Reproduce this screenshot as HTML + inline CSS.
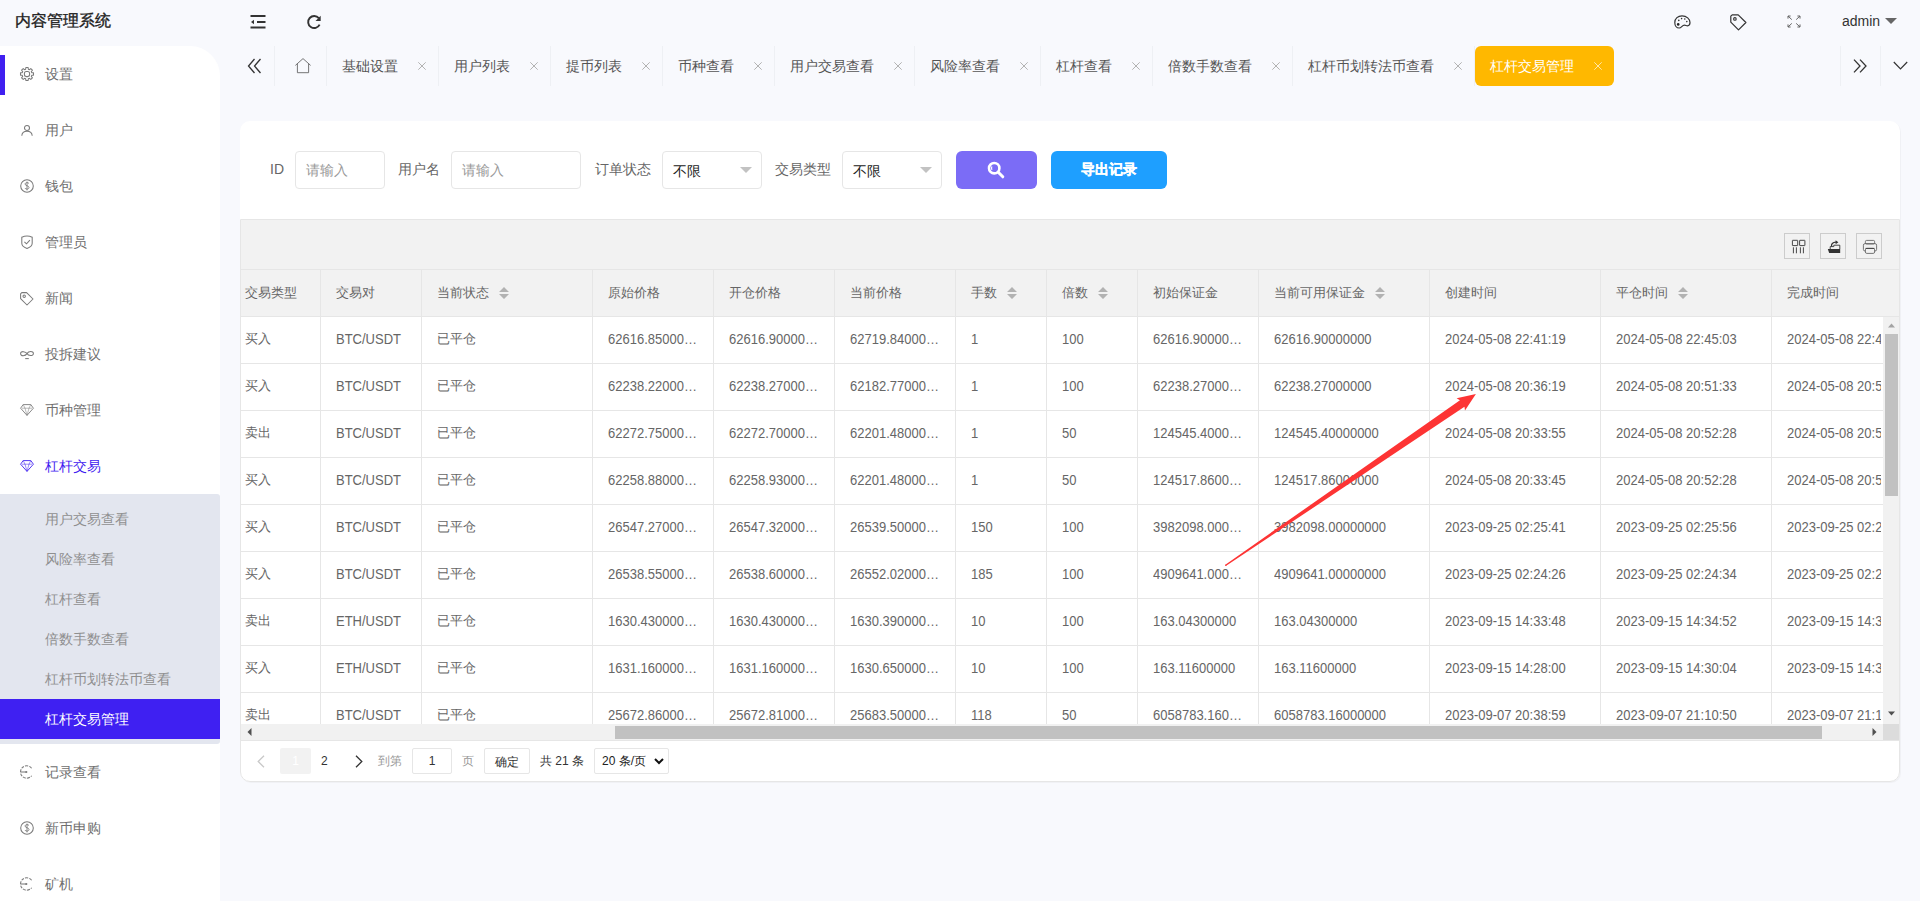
<!DOCTYPE html><html><head><meta charset="utf-8"><title>内容管理系统</title><style>
*{margin:0;padding:0;box-sizing:border-box}
html,body{width:1920px;height:901px;overflow:hidden;background:#f8f9fd;font-family:"Liberation Sans",sans-serif;}
.abs{position:absolute}
.t{position:absolute;white-space:nowrap}
svg{position:absolute;overflow:visible}
</style></head><body>
<div class="t" style="left:15px;top:10px;font-size:16px;line-height:22px;color:#222;-webkit-text-stroke:0.35px #222">内容管理系统</div>
<svg style="left:250px;top:14px" width="16" height="16" viewBox="0 0 16 16"><path d="M0.5 2h15M7 8h8.5M0.5 13.5h15" stroke="#333" stroke-width="1.8" fill="none"/><path d="M1 8l3-2.2v4.4z" fill="#333"/></svg>
<svg style="left:307px;top:14.5px" width="15" height="15" viewBox="0 0 15 15"><path d="M12.6 9.6A6 6 0 1 1 11.8 3.2" stroke="#333" stroke-width="1.9" fill="none"/><path d="M13.7 0.8v5.2H8.5z" fill="#333"/></svg>
<svg style="left:1674px;top:15px" width="17" height="14" viewBox="0 0 17 14"><path d="M8 0.8C4 0.8 0.8 3.6 0.8 7.4c0 3 1.6 5.6 4.4 5.6 2.3 0 2.8-2.8 5.3-2.8 1.2 0 1.8 0.6 3 0.6 1.2 0 2.5-1 2.5-3.2C16 4 12.6 0.8 8 0.8z" stroke="#333" stroke-width="1.2" fill="none"/><circle cx="4.2" cy="9.4" r="1.3" fill="#222"/><circle cx="4.8" cy="5.4" r="0.8" fill="#333"/><circle cx="7.6" cy="3.6" r="0.8" fill="#333"/><circle cx="10.8" cy="4" r="0.8" fill="#333"/><circle cx="12.8" cy="6.6" r="0.8" fill="#333"/></svg>
<svg style="left:1730px;top:14px" width="17" height="17" viewBox="0 0 17 17"><path d="M0.8 2.2L2.2 0.8H8.2L15.9 8.5L8.5 15.9L0.8 8.2z" stroke="#333" stroke-width="1.2" fill="none" stroke-linejoin="round"/><circle cx="4.9" cy="4.9" r="1.3" stroke="#333" stroke-width="1.1" fill="none"/></svg>
<svg style="left:1787px;top:15px" width="14" height="13" viewBox="0 0 14 13"><path d="M1.2 1.2l3.6 3.4M1 1h2.6M1 1v2.6M12.8 1.2l-3.6 3.4M13 1h-2.6M13 1v2.6M1.2 11.8l3.6-3.4M1 12h2.6M1 12v-2.6M12.8 11.8l-3.6-3.4M13 12h-2.6M13 12v-2.6" stroke="#555" stroke-width="0.9" fill="none"/></svg>
<div class="t" style="left:1842px;top:13px;font-size:14px;line-height:17px;color:#333">admin</div>
<svg style="left:1885px;top:18px" width="12" height="6" viewBox="0 0 12 6"><path d="M0 0h12L6 6z" fill="#666"/></svg>
<div class="abs" style="left:0;top:46px;width:220px;height:855px;background:#fff;border-top-right-radius:30px"></div>
<div class="abs" style="left:0;top:55px;width:5px;height:40px;background:#4020f0"></div>
<svg style="left:20px;top:66.5px" width="14" height="14" viewBox="0 0 14 14"><path d="M5.85 0.50L8.15 0.50L8.35 2.29L9.38 2.71L10.79 1.59L12.41 3.21L11.29 4.62L11.71 5.65L13.50 5.85L13.50 8.15L11.71 8.35L11.29 9.38L12.41 10.79L10.79 12.41L9.38 11.29L8.35 11.71L8.15 13.50L5.85 13.50L5.65 11.71L4.62 11.29L3.21 12.41L1.59 10.79L2.71 9.38L2.29 8.35L0.50 8.15L0.50 5.85L2.29 5.65L2.71 4.62L1.59 3.21L3.21 1.59L4.62 2.71L5.65 2.29z" stroke="#7a7a7a" stroke-width="1.05" fill="none" stroke-linejoin="round"/><rect x="4.4" y="4.4" width="5.2" height="5.2" rx="2" stroke="#7a7a7a" stroke-width="1.05" fill="none"/></svg>
<div class="t" style="left:45px;top:63.5px;font-size:14px;line-height:20px;color:#6f6f6f">设置</div>
<svg style="left:21px;top:124.5px" width="12" height="12" viewBox="0 0 12 12"><circle cx="6" cy="2.9" r="2.5" stroke="#7a7a7a" stroke-width="1.05" fill="none"/><path d="M0.8 10.8C1 7.8 3.2 6.2 6 6.2s5 1.6 5.2 4.6" stroke="#7a7a7a" stroke-width="1.05" fill="none"/></svg>
<div class="t" style="left:45px;top:119.5px;font-size:14px;line-height:20px;color:#6f6f6f">用户</div>
<svg style="left:20px;top:179px" width="14" height="14" viewBox="0 0 14 14"><circle cx="7" cy="7" r="6.3" stroke="#7a7a7a" stroke-width="1.05" fill="none"/><path d="M9 4.6C8.6 3.9 7.9 3.6 7 3.6 5.9 3.6 5.1 4.2 5.1 5.1c0 2 3.9 1.3 3.9 3.4 0 0.9-0.8 1.6-2 1.6-1 0-1.8-0.4-2.1-1.1M7 2.6v8.8" stroke="#7a7a7a" stroke-width="0.9" fill="none"/></svg>
<div class="t" style="left:45px;top:176px;font-size:14px;line-height:20px;color:#6f6f6f">钱包</div>
<svg style="left:21px;top:235px" width="12" height="14" viewBox="0 0 12 14"><path d="M0.8 2.2Q6 -0.2 11.2 2.2V8.2C11.2 10.8 8.8 12.4 6 13.4 3.2 12.4 0.8 10.8 0.8 8.2z" stroke="#7a7a7a" stroke-width="1.05" fill="none"/><path d="M3.4 6.8l2.1 2 3.4-3.6" stroke="#7a7a7a" stroke-width="1.05" fill="none"/></svg>
<div class="t" style="left:45px;top:232px;font-size:14px;line-height:20px;color:#6f6f6f">管理员</div>
<svg style="left:20px;top:292px" width="14" height="14" viewBox="0 0 14 14"><path d="M0.6 1.8L1.8 0.6H6.6L13 7L7 13L0.6 6.6z" stroke="#7a7a7a" stroke-width="1.05" fill="none" stroke-linejoin="round"/><circle cx="4.2" cy="4.2" r="1.2" stroke="#7a7a7a" stroke-width="1.05" fill="none"/></svg>
<div class="t" style="left:45px;top:288px;font-size:14px;line-height:20px;color:#6f6f6f">新闻</div>
<svg style="left:20px;top:350px" width="14" height="12" viewBox="0 0 14 12"><path d="M7 3.6C5.8 1.4 0.6 0.6 0.6 3.6 0.6 6.6 5.4 6.2 7 3.6S13.4 0.8 13.4 3.6 8.2 6 7 3.6" stroke="#7a7a7a" stroke-width="1.05" fill="none"/><path d="M5.2 8.6h3.6" stroke="#7a7a7a" stroke-width="1.05"/></svg>
<div class="t" style="left:45px;top:344px;font-size:14px;line-height:20px;color:#6f6f6f">投拆建议</div>
<svg style="left:20px;top:404px" width="14" height="12" viewBox="0 0 14 12"><path d="M3.2 0.6h7.6L13.4 4.2L7 11.4L0.6 4.2z" stroke="#7a7a7a" stroke-width="0.9" fill="none" stroke-linejoin="round"/><path d="M2 4.2h10 M3.2 0.6L5 4.2L7 11.4L9 4.2L10.8 0.6" stroke="#7a7a7a" stroke-width="0.65" fill="none" stroke-linejoin="round" opacity="0.8"/></svg>
<div class="t" style="left:45px;top:400px;font-size:14px;line-height:20px;color:#6f6f6f">币种管理</div>
<svg style="left:20px;top:460px" width="14" height="12" viewBox="0 0 14 12"><path d="M3.2 0.6h7.6L13.4 4.2L7 11.4L0.6 4.2z" stroke="#4020f0" stroke-width="0.9" fill="none" stroke-linejoin="round"/><path d="M2 4.2h10 M3.2 0.6L5 4.2L7 11.4L9 4.2L10.8 0.6" stroke="#4020f0" stroke-width="0.65" fill="none" stroke-linejoin="round" opacity="0.8"/></svg>
<div class="t" style="left:45px;top:456px;font-size:14px;line-height:20px;color:#4020f0">杠杆交易</div>
<svg style="left:20px;top:765px" width="14" height="14" viewBox="0 0 14 14"><path d="M11.6 3.2A6.2 6.2 0 1 0 11.6 10.8" stroke="#7a7a7a" stroke-width="1.05" fill="none" stroke-dasharray="3 1.1"/><path d="M1 7h5" stroke="#7a7a7a" stroke-width="1.05"/><circle cx="6.3" cy="7" r="1.1" fill="#7a7a7a"/></svg>
<div class="t" style="left:45px;top:762px;font-size:14px;line-height:20px;color:#6f6f6f">记录查看</div>
<svg style="left:20px;top:821px" width="14" height="14" viewBox="0 0 14 14"><circle cx="7" cy="7" r="6.3" stroke="#7a7a7a" stroke-width="1.05" fill="none"/><path d="M9 4.6C8.6 3.9 7.9 3.6 7 3.6 5.9 3.6 5.1 4.2 5.1 5.1c0 2 3.9 1.3 3.9 3.4 0 0.9-0.8 1.6-2 1.6-1 0-1.8-0.4-2.1-1.1M7 2.6v8.8" stroke="#7a7a7a" stroke-width="0.9" fill="none"/></svg>
<div class="t" style="left:45px;top:818px;font-size:14px;line-height:20px;color:#6f6f6f">新币申购</div>
<svg style="left:20px;top:877px" width="14" height="14" viewBox="0 0 14 14"><path d="M11.6 3.2A6.2 6.2 0 1 0 11.6 10.8" stroke="#7a7a7a" stroke-width="1.05" fill="none" stroke-dasharray="3 1.1"/><path d="M1 7h5" stroke="#7a7a7a" stroke-width="1.05"/><circle cx="6.3" cy="7" r="1.1" fill="#7a7a7a"/></svg>
<div class="t" style="left:45px;top:874px;font-size:14px;line-height:20px;color:#6f6f6f">矿机</div>
<div class="abs" style="left:0;top:494px;width:220px;height:250px;background:#e3e6ef;border-radius:0 3px 3px 0"></div>
<div class="abs" style="left:0;top:699px;width:220px;height:40px;background:#3f20f2"></div>
<div class="t" style="left:45px;top:508.5px;font-size:14px;line-height:20px;color:#8f8f8f">用户交易查看</div>
<div class="t" style="left:45px;top:548.5px;font-size:14px;line-height:20px;color:#8f8f8f">风险率查看</div>
<div class="t" style="left:45px;top:588.5px;font-size:14px;line-height:20px;color:#8f8f8f">杠杆查看</div>
<div class="t" style="left:45px;top:628.5px;font-size:14px;line-height:20px;color:#8f8f8f">倍数手数查看</div>
<div class="t" style="left:45px;top:668.5px;font-size:14px;line-height:20px;color:#8f8f8f">杠杆币划转法币查看</div>
<div class="t" style="left:45px;top:708.5px;font-size:14px;line-height:20px;color:#fff">杠杆交易管理</div>
<div class="abs" style="left:274px;top:46px;width:1px;height:40px;background:#eef0f4"></div>
<div class="abs" style="left:326px;top:46px;width:1px;height:40px;background:#eef0f4"></div>
<div class="abs" style="left:438px;top:46px;width:1px;height:40px;background:#eef0f4"></div>
<div class="abs" style="left:550px;top:46px;width:1px;height:40px;background:#eef0f4"></div>
<div class="abs" style="left:662px;top:46px;width:1px;height:40px;background:#eef0f4"></div>
<div class="abs" style="left:774px;top:46px;width:1px;height:40px;background:#eef0f4"></div>
<div class="abs" style="left:914px;top:46px;width:1px;height:40px;background:#eef0f4"></div>
<div class="abs" style="left:1040px;top:46px;width:1px;height:40px;background:#eef0f4"></div>
<div class="abs" style="left:1152px;top:46px;width:1px;height:40px;background:#eef0f4"></div>
<div class="abs" style="left:1292px;top:46px;width:1px;height:40px;background:#eef0f4"></div>
<div class="abs" style="left:1474px;top:46px;width:1px;height:40px;background:#eef0f4"></div>
<div class="abs" style="left:1840px;top:46px;width:1px;height:40px;background:#eef0f4"></div>
<div class="abs" style="left:1880px;top:46px;width:1px;height:40px;background:#eef0f4"></div>
<svg style="left:247px;top:58px" width="15" height="16" viewBox="0 0 15 16"><path d="M7.5 1L1.5 8l6 7M13.5 1l-6 7 6 7" stroke="#333" stroke-width="1.3" fill="none"/></svg>
<svg style="left:295px;top:58px" width="16" height="16" viewBox="0 0 16 16"><path d="M0.4 7.4L8 0.6L15.6 7.4M2.4 5.8v8.9h11.2V5.8" stroke="#666" stroke-width="0.9" fill="none"/></svg>
<div class="t" style="left:342px;top:56px;font-size:14px;line-height:20px;color:#555">基础设置</div>
<svg style="left:418px;top:62px" width="8" height="8" viewBox="0 0 8 8"><path d="M0.3 0.3l7.4 7.4M7.7 0.3l-7.4 7.4" stroke="#b3b3b3" stroke-width="1"/></svg>
<div class="t" style="left:454px;top:56px;font-size:14px;line-height:20px;color:#555">用户列表</div>
<svg style="left:530px;top:62px" width="8" height="8" viewBox="0 0 8 8"><path d="M0.3 0.3l7.4 7.4M7.7 0.3l-7.4 7.4" stroke="#b3b3b3" stroke-width="1"/></svg>
<div class="t" style="left:566px;top:56px;font-size:14px;line-height:20px;color:#555">提币列表</div>
<svg style="left:642px;top:62px" width="8" height="8" viewBox="0 0 8 8"><path d="M0.3 0.3l7.4 7.4M7.7 0.3l-7.4 7.4" stroke="#b3b3b3" stroke-width="1"/></svg>
<div class="t" style="left:678px;top:56px;font-size:14px;line-height:20px;color:#555">币种查看</div>
<svg style="left:754px;top:62px" width="8" height="8" viewBox="0 0 8 8"><path d="M0.3 0.3l7.4 7.4M7.7 0.3l-7.4 7.4" stroke="#b3b3b3" stroke-width="1"/></svg>
<div class="t" style="left:790px;top:56px;font-size:14px;line-height:20px;color:#555">用户交易查看</div>
<svg style="left:894px;top:62px" width="8" height="8" viewBox="0 0 8 8"><path d="M0.3 0.3l7.4 7.4M7.7 0.3l-7.4 7.4" stroke="#b3b3b3" stroke-width="1"/></svg>
<div class="t" style="left:930px;top:56px;font-size:14px;line-height:20px;color:#555">风险率查看</div>
<svg style="left:1020px;top:62px" width="8" height="8" viewBox="0 0 8 8"><path d="M0.3 0.3l7.4 7.4M7.7 0.3l-7.4 7.4" stroke="#b3b3b3" stroke-width="1"/></svg>
<div class="t" style="left:1056px;top:56px;font-size:14px;line-height:20px;color:#555">杠杆查看</div>
<svg style="left:1132px;top:62px" width="8" height="8" viewBox="0 0 8 8"><path d="M0.3 0.3l7.4 7.4M7.7 0.3l-7.4 7.4" stroke="#b3b3b3" stroke-width="1"/></svg>
<div class="t" style="left:1168px;top:56px;font-size:14px;line-height:20px;color:#555">倍数手数查看</div>
<svg style="left:1272px;top:62px" width="8" height="8" viewBox="0 0 8 8"><path d="M0.3 0.3l7.4 7.4M7.7 0.3l-7.4 7.4" stroke="#b3b3b3" stroke-width="1"/></svg>
<div class="t" style="left:1308px;top:56px;font-size:14px;line-height:20px;color:#555">杠杆币划转法币查看</div>
<svg style="left:1454px;top:62px" width="8" height="8" viewBox="0 0 8 8"><path d="M0.3 0.3l7.4 7.4M7.7 0.3l-7.4 7.4" stroke="#b3b3b3" stroke-width="1"/></svg>
<div class="abs" style="left:1475px;top:46px;width:139px;height:40px;background:#ffb800;border-radius:6px"></div>
<div class="t" style="left:1490px;top:56px;font-size:14px;line-height:20px;color:#fff">杠杆交易管理</div>
<svg style="left:1594px;top:62px" width="8" height="8" viewBox="0 0 8 8"><path d="M0.3 0.3l7.4 7.4M7.7 0.3l-7.4 7.4" stroke="#ffe6a8" stroke-width="1"/></svg>
<svg style="left:1853px;top:59px" width="14" height="14" viewBox="0 0 14 14"><path d="M1 0.6l6 6.4-6 6.4M7 0.6l6 6.4-6 6.4" stroke="#333" stroke-width="1.3" fill="none"/></svg>
<svg style="left:1893px;top:61px" width="15" height="9" viewBox="0 0 15 9"><path d="M0.8 1l6.7 7 6.7-7" stroke="#333" stroke-width="1.2" fill="none"/></svg>
<div class="abs" style="left:240px;top:121px;width:1660px;height:661px;background:#fff;border-radius:10px;box-shadow:1px 1px 1px rgba(0,0,40,0.035)"></div>
<div class="t" style="left:270px;top:159px;font-size:14px;line-height:20px;color:#666">ID</div>
<div class="abs" style="left:295px;top:151px;width:90px;height:38px;border:1px solid #e6e6e6;border-radius:4px;background:#fff"></div>
<div class="t" style="left:306px;top:160px;font-size:14px;line-height:20px;color:#999">请输入</div>
<div class="t" style="left:398px;top:159px;font-size:14px;line-height:20px;color:#666">用户名</div>
<div class="abs" style="left:451px;top:151px;width:130px;height:38px;border:1px solid #e6e6e6;border-radius:4px;background:#fff"></div>
<div class="t" style="left:462px;top:160px;font-size:14px;line-height:20px;color:#999">请输入</div>
<div class="t" style="left:595px;top:159px;font-size:14px;line-height:20px;color:#666">订单状态</div>
<div class="abs" style="left:662px;top:151px;width:100px;height:38px;border:1px solid #e6e6e6;border-radius:4px;background:#fff"></div>
<div class="t" style="left:673px;top:161px;font-size:14px;line-height:20px;color:#222">不限</div>
<svg style="left:740px;top:167px" width="12" height="6" viewBox="0 0 12 6"><path d="M0 0h12L6 6z" fill="#c2c2c2"/></svg>
<div class="t" style="left:775px;top:159px;font-size:14px;line-height:20px;color:#666">交易类型</div>
<div class="abs" style="left:842px;top:151px;width:100px;height:38px;border:1px solid #e6e6e6;border-radius:4px;background:#fff"></div>
<div class="t" style="left:853px;top:161px;font-size:14px;line-height:20px;color:#222">不限</div>
<svg style="left:920px;top:167px" width="12" height="6" viewBox="0 0 12 6"><path d="M0 0h12L6 6z" fill="#c2c2c2"/></svg>
<div class="abs" style="left:956px;top:151px;width:81px;height:38px;background:#7b6cf6;border-radius:6px"></div>
<svg style="left:987px;top:161px" width="18" height="18" viewBox="0 0 18 18"><circle cx="7.2" cy="7.2" r="5.2" stroke="#fff" stroke-width="2.6" fill="none"/><path d="M11 11l4.8 4.8" stroke="#fff" stroke-width="3" stroke-linecap="round"/><path d="M5 5.5a3 3 0 0 0 0 3.4" stroke="#fff" stroke-width="1.2" fill="none"/></svg>
<div class="abs" style="left:1051px;top:151px;width:116px;height:38px;background:#1e9fff;border-radius:6px"></div>
<div class="t" style="left:1081px;top:159px;font-size:14px;line-height:20px;color:#fff;font-weight:bold;-webkit-text-stroke:0.3px #fff">导出记录</div>
<div class="abs" style="left:240px;top:219px;width:1660px;height:563px;border:1px solid #e6e6e6;border-bottom-left-radius:10px;border-bottom-right-radius:10px"></div>
<div class="abs" style="left:241px;top:220px;width:1658px;height:96px;background:#f2f2f2"></div>
<div class="abs" style="left:241px;top:269px;width:1658px;height:1px;background:#e6e6e6"></div>
<div class="abs" style="left:241px;top:316px;width:1658px;height:1px;background:#e6e6e6"></div>
<div class="abs" style="left:1784px;top:233px;width:26px;height:26px;border:1px solid #ccc"></div>
<div class="abs" style="left:1820px;top:233px;width:26px;height:26px;border:1px solid #ccc"></div>
<div class="abs" style="left:1856px;top:233px;width:26px;height:26px;border:1px solid #ccc"></div>
<svg style="left:1782px;top:231px" width="30" height="30" viewBox="0 0 30 30"><rect x="10.4" y="9.3" width="5.3" height="5.3" rx="0.3" stroke="#333" stroke-width="0.9" fill="none"/><rect x="17.6" y="9.3" width="5.3" height="5.3" rx="0.3" stroke="#333" stroke-width="0.9" fill="none"/><path d="M11.4 16.3v6M14.4 16.3v6M18.4 16.3v6M21.4 16.3v6" stroke="#333" stroke-width="0.9"/></svg>
<svg style="left:1818px;top:231px" width="30" height="30" viewBox="0 0 30 30"><path d="M9.8 18.1H22.2V22H11.2z" fill="#333"/><path d="M12.2 18V15.6h3.6v-1.4h6V18" stroke="#333" stroke-width="0.9" fill="none"/><path d="M13.6 15.6c-0.6-2.6 1-4.2 4.4-4.4" stroke="#333" stroke-width="1.3" fill="none"/><path d="M17.6 9.2L20.4 11.2L17.6 13.2z" fill="#333"/></svg>
<svg style="left:1854px;top:231px" width="30" height="30" viewBox="0 0 30 30"><rect x="11.4" y="9.4" width="9.2" height="3.6" rx="1.2" stroke="#666" stroke-width="0.9" fill="none"/><rect x="9.4" y="12.6" width="13.2" height="7.4" rx="1.6" stroke="#666" stroke-width="0.9" fill="none"/><rect x="11.4" y="17.4" width="9.2" height="5" rx="1.4" stroke="#666" stroke-width="0.9" fill="#f2f2f2"/><path d="M11.6 17.4h8.8" stroke="#444" stroke-width="1"/></svg>
<div class="abs" style="left:320px;top:270px;width:1px;height:46px;background:#e6e6e6"></div>
<div class="abs" style="left:421px;top:270px;width:1px;height:46px;background:#e6e6e6"></div>
<div class="abs" style="left:592px;top:270px;width:1px;height:46px;background:#e6e6e6"></div>
<div class="abs" style="left:713px;top:270px;width:1px;height:46px;background:#e6e6e6"></div>
<div class="abs" style="left:834px;top:270px;width:1px;height:46px;background:#e6e6e6"></div>
<div class="abs" style="left:955px;top:270px;width:1px;height:46px;background:#e6e6e6"></div>
<div class="abs" style="left:1046px;top:270px;width:1px;height:46px;background:#e6e6e6"></div>
<div class="abs" style="left:1137px;top:270px;width:1px;height:46px;background:#e6e6e6"></div>
<div class="abs" style="left:1258px;top:270px;width:1px;height:46px;background:#e6e6e6"></div>
<div class="abs" style="left:1429px;top:270px;width:1px;height:46px;background:#e6e6e6"></div>
<div class="abs" style="left:1600px;top:270px;width:1px;height:46px;background:#e6e6e6"></div>
<div class="abs" style="left:1771px;top:270px;width:1px;height:46px;background:#e6e6e6"></div>
<div class="t" style="left:245px;top:284px;font-size:13px;line-height:18px;color:#666">交易类型</div>
<div class="t" style="left:336px;top:284px;font-size:13px;line-height:18px;color:#666">交易对</div>
<div class="t" style="left:437px;top:284px;font-size:13px;line-height:18px;color:#666">当前状态</div>
<svg style="left:499px;top:287px" width="10" height="12" viewBox="0 0 10 12"><path d="M0 5L5 0L10 5z M0 7L5 12L10 7z" fill="#b2b2b2"/></svg>
<div class="t" style="left:608px;top:284px;font-size:13px;line-height:18px;color:#666">原始价格</div>
<div class="t" style="left:729px;top:284px;font-size:13px;line-height:18px;color:#666">开仓价格</div>
<div class="t" style="left:850px;top:284px;font-size:13px;line-height:18px;color:#666">当前价格</div>
<div class="t" style="left:971px;top:284px;font-size:13px;line-height:18px;color:#666">手数</div>
<svg style="left:1007px;top:287px" width="10" height="12" viewBox="0 0 10 12"><path d="M0 5L5 0L10 5z M0 7L5 12L10 7z" fill="#b2b2b2"/></svg>
<div class="t" style="left:1062px;top:284px;font-size:13px;line-height:18px;color:#666">倍数</div>
<svg style="left:1098px;top:287px" width="10" height="12" viewBox="0 0 10 12"><path d="M0 5L5 0L10 5z M0 7L5 12L10 7z" fill="#b2b2b2"/></svg>
<div class="t" style="left:1153px;top:284px;font-size:13px;line-height:18px;color:#666">初始保证金</div>
<div class="t" style="left:1274px;top:284px;font-size:13px;line-height:18px;color:#666">当前可用保证金</div>
<svg style="left:1375px;top:287px" width="10" height="12" viewBox="0 0 10 12"><path d="M0 5L5 0L10 5z M0 7L5 12L10 7z" fill="#b2b2b2"/></svg>
<div class="t" style="left:1445px;top:284px;font-size:13px;line-height:18px;color:#666">创建时间</div>
<div class="t" style="left:1616px;top:284px;font-size:13px;line-height:18px;color:#666">平仓时间</div>
<svg style="left:1678px;top:287px" width="10" height="12" viewBox="0 0 10 12"><path d="M0 5L5 0L10 5z M0 7L5 12L10 7z" fill="#b2b2b2"/></svg>
<div class="t" style="left:1787px;top:284px;font-size:13px;line-height:18px;color:#666">完成时间</div>
<div class="abs" style="left:241px;top:317px;width:1642px;height:407px;overflow:hidden;background:#fff">
<div class="t" style="left:4px;top:13px;font-size:13px;line-height:18px;color:#666">买入</div>
<div class="t" style="left:95px;top:13px;font-size:13px;line-height:18px;color:#666;transform:scaleY(1.075);transform-origin:0 4.2px">BTC/USDT</div>
<div class="t" style="left:196px;top:13px;font-size:13px;line-height:18px;color:#666">已平仓</div>
<div class="t" style="left:367px;top:13px;font-size:13px;line-height:18px;color:#666;transform:scaleY(1.075);transform-origin:0 4.2px">62616.85000…</div>
<div class="t" style="left:488px;top:13px;font-size:13px;line-height:18px;color:#666;transform:scaleY(1.075);transform-origin:0 4.2px">62616.90000…</div>
<div class="t" style="left:609px;top:13px;font-size:13px;line-height:18px;color:#666;transform:scaleY(1.075);transform-origin:0 4.2px">62719.84000…</div>
<div class="t" style="left:730px;top:13px;font-size:13px;line-height:18px;color:#666;transform:scaleY(1.075);transform-origin:0 4.2px">1</div>
<div class="t" style="left:821px;top:13px;font-size:13px;line-height:18px;color:#666;transform:scaleY(1.075);transform-origin:0 4.2px">100</div>
<div class="t" style="left:912px;top:13px;font-size:13px;line-height:18px;color:#666;transform:scaleY(1.075);transform-origin:0 4.2px">62616.90000…</div>
<div class="t" style="left:1033px;top:13px;font-size:13px;line-height:18px;color:#666;transform:scaleY(1.075);transform-origin:0 4.2px">62616.90000000</div>
<div class="t" style="left:1204px;top:13px;font-size:13px;line-height:18px;color:#666;transform:scaleY(1.075);transform-origin:0 4.2px">2024-05-08 22:41:19</div>
<div class="t" style="left:1375px;top:13px;font-size:13px;line-height:18px;color:#666;transform:scaleY(1.075);transform-origin:0 4.2px">2024-05-08 22:45:03</div>
<div class="t" style="left:1546px;top:13px;font-size:13px;line-height:18px;color:#666;transform:scaleY(1.075);transform-origin:0 4.2px;width:94px;overflow:hidden">2024-05-08 22:41:19</div>
<div class="abs" style="left:0;top:46px;width:1642px;height:1px;background:#e6e6e6"></div>
<div class="t" style="left:4px;top:60px;font-size:13px;line-height:18px;color:#666">买入</div>
<div class="t" style="left:95px;top:60px;font-size:13px;line-height:18px;color:#666;transform:scaleY(1.075);transform-origin:0 4.2px">BTC/USDT</div>
<div class="t" style="left:196px;top:60px;font-size:13px;line-height:18px;color:#666">已平仓</div>
<div class="t" style="left:367px;top:60px;font-size:13px;line-height:18px;color:#666;transform:scaleY(1.075);transform-origin:0 4.2px">62238.22000…</div>
<div class="t" style="left:488px;top:60px;font-size:13px;line-height:18px;color:#666;transform:scaleY(1.075);transform-origin:0 4.2px">62238.27000…</div>
<div class="t" style="left:609px;top:60px;font-size:13px;line-height:18px;color:#666;transform:scaleY(1.075);transform-origin:0 4.2px">62182.77000…</div>
<div class="t" style="left:730px;top:60px;font-size:13px;line-height:18px;color:#666;transform:scaleY(1.075);transform-origin:0 4.2px">1</div>
<div class="t" style="left:821px;top:60px;font-size:13px;line-height:18px;color:#666;transform:scaleY(1.075);transform-origin:0 4.2px">100</div>
<div class="t" style="left:912px;top:60px;font-size:13px;line-height:18px;color:#666;transform:scaleY(1.075);transform-origin:0 4.2px">62238.27000…</div>
<div class="t" style="left:1033px;top:60px;font-size:13px;line-height:18px;color:#666;transform:scaleY(1.075);transform-origin:0 4.2px">62238.27000000</div>
<div class="t" style="left:1204px;top:60px;font-size:13px;line-height:18px;color:#666;transform:scaleY(1.075);transform-origin:0 4.2px">2024-05-08 20:36:19</div>
<div class="t" style="left:1375px;top:60px;font-size:13px;line-height:18px;color:#666;transform:scaleY(1.075);transform-origin:0 4.2px">2024-05-08 20:51:33</div>
<div class="t" style="left:1546px;top:60px;font-size:13px;line-height:18px;color:#666;transform:scaleY(1.075);transform-origin:0 4.2px;width:94px;overflow:hidden">2024-05-08 20:51:33</div>
<div class="abs" style="left:0;top:93px;width:1642px;height:1px;background:#e6e6e6"></div>
<div class="t" style="left:4px;top:107px;font-size:13px;line-height:18px;color:#666">卖出</div>
<div class="t" style="left:95px;top:107px;font-size:13px;line-height:18px;color:#666;transform:scaleY(1.075);transform-origin:0 4.2px">BTC/USDT</div>
<div class="t" style="left:196px;top:107px;font-size:13px;line-height:18px;color:#666">已平仓</div>
<div class="t" style="left:367px;top:107px;font-size:13px;line-height:18px;color:#666;transform:scaleY(1.075);transform-origin:0 4.2px">62272.75000…</div>
<div class="t" style="left:488px;top:107px;font-size:13px;line-height:18px;color:#666;transform:scaleY(1.075);transform-origin:0 4.2px">62272.70000…</div>
<div class="t" style="left:609px;top:107px;font-size:13px;line-height:18px;color:#666;transform:scaleY(1.075);transform-origin:0 4.2px">62201.48000…</div>
<div class="t" style="left:730px;top:107px;font-size:13px;line-height:18px;color:#666;transform:scaleY(1.075);transform-origin:0 4.2px">1</div>
<div class="t" style="left:821px;top:107px;font-size:13px;line-height:18px;color:#666;transform:scaleY(1.075);transform-origin:0 4.2px">50</div>
<div class="t" style="left:912px;top:107px;font-size:13px;line-height:18px;color:#666;transform:scaleY(1.075);transform-origin:0 4.2px">124545.4000…</div>
<div class="t" style="left:1033px;top:107px;font-size:13px;line-height:18px;color:#666;transform:scaleY(1.075);transform-origin:0 4.2px">124545.40000000</div>
<div class="t" style="left:1204px;top:107px;font-size:13px;line-height:18px;color:#666;transform:scaleY(1.075);transform-origin:0 4.2px">2024-05-08 20:33:55</div>
<div class="t" style="left:1375px;top:107px;font-size:13px;line-height:18px;color:#666;transform:scaleY(1.075);transform-origin:0 4.2px">2024-05-08 20:52:28</div>
<div class="t" style="left:1546px;top:107px;font-size:13px;line-height:18px;color:#666;transform:scaleY(1.075);transform-origin:0 4.2px;width:94px;overflow:hidden">2024-05-08 20:52:28</div>
<div class="abs" style="left:0;top:140px;width:1642px;height:1px;background:#e6e6e6"></div>
<div class="t" style="left:4px;top:154px;font-size:13px;line-height:18px;color:#666">买入</div>
<div class="t" style="left:95px;top:154px;font-size:13px;line-height:18px;color:#666;transform:scaleY(1.075);transform-origin:0 4.2px">BTC/USDT</div>
<div class="t" style="left:196px;top:154px;font-size:13px;line-height:18px;color:#666">已平仓</div>
<div class="t" style="left:367px;top:154px;font-size:13px;line-height:18px;color:#666;transform:scaleY(1.075);transform-origin:0 4.2px">62258.88000…</div>
<div class="t" style="left:488px;top:154px;font-size:13px;line-height:18px;color:#666;transform:scaleY(1.075);transform-origin:0 4.2px">62258.93000…</div>
<div class="t" style="left:609px;top:154px;font-size:13px;line-height:18px;color:#666;transform:scaleY(1.075);transform-origin:0 4.2px">62201.48000…</div>
<div class="t" style="left:730px;top:154px;font-size:13px;line-height:18px;color:#666;transform:scaleY(1.075);transform-origin:0 4.2px">1</div>
<div class="t" style="left:821px;top:154px;font-size:13px;line-height:18px;color:#666;transform:scaleY(1.075);transform-origin:0 4.2px">50</div>
<div class="t" style="left:912px;top:154px;font-size:13px;line-height:18px;color:#666;transform:scaleY(1.075);transform-origin:0 4.2px">124517.8600…</div>
<div class="t" style="left:1033px;top:154px;font-size:13px;line-height:18px;color:#666;transform:scaleY(1.075);transform-origin:0 4.2px">124517.86000000</div>
<div class="t" style="left:1204px;top:154px;font-size:13px;line-height:18px;color:#666;transform:scaleY(1.075);transform-origin:0 4.2px">2024-05-08 20:33:45</div>
<div class="t" style="left:1375px;top:154px;font-size:13px;line-height:18px;color:#666;transform:scaleY(1.075);transform-origin:0 4.2px">2024-05-08 20:52:28</div>
<div class="t" style="left:1546px;top:154px;font-size:13px;line-height:18px;color:#666;transform:scaleY(1.075);transform-origin:0 4.2px;width:94px;overflow:hidden">2024-05-08 20:52:28</div>
<div class="abs" style="left:0;top:187px;width:1642px;height:1px;background:#e6e6e6"></div>
<div class="t" style="left:4px;top:201px;font-size:13px;line-height:18px;color:#666">买入</div>
<div class="t" style="left:95px;top:201px;font-size:13px;line-height:18px;color:#666;transform:scaleY(1.075);transform-origin:0 4.2px">BTC/USDT</div>
<div class="t" style="left:196px;top:201px;font-size:13px;line-height:18px;color:#666">已平仓</div>
<div class="t" style="left:367px;top:201px;font-size:13px;line-height:18px;color:#666;transform:scaleY(1.075);transform-origin:0 4.2px">26547.27000…</div>
<div class="t" style="left:488px;top:201px;font-size:13px;line-height:18px;color:#666;transform:scaleY(1.075);transform-origin:0 4.2px">26547.32000…</div>
<div class="t" style="left:609px;top:201px;font-size:13px;line-height:18px;color:#666;transform:scaleY(1.075);transform-origin:0 4.2px">26539.50000…</div>
<div class="t" style="left:730px;top:201px;font-size:13px;line-height:18px;color:#666;transform:scaleY(1.075);transform-origin:0 4.2px">150</div>
<div class="t" style="left:821px;top:201px;font-size:13px;line-height:18px;color:#666;transform:scaleY(1.075);transform-origin:0 4.2px">100</div>
<div class="t" style="left:912px;top:201px;font-size:13px;line-height:18px;color:#666;transform:scaleY(1.075);transform-origin:0 4.2px">3982098.000…</div>
<div class="t" style="left:1033px;top:201px;font-size:13px;line-height:18px;color:#666;transform:scaleY(1.075);transform-origin:0 4.2px">3982098.00000000</div>
<div class="t" style="left:1204px;top:201px;font-size:13px;line-height:18px;color:#666;transform:scaleY(1.075);transform-origin:0 4.2px">2023-09-25 02:25:41</div>
<div class="t" style="left:1375px;top:201px;font-size:13px;line-height:18px;color:#666;transform:scaleY(1.075);transform-origin:0 4.2px">2023-09-25 02:25:56</div>
<div class="t" style="left:1546px;top:201px;font-size:13px;line-height:18px;color:#666;transform:scaleY(1.075);transform-origin:0 4.2px;width:94px;overflow:hidden">2023-09-25 02:25:56</div>
<div class="abs" style="left:0;top:234px;width:1642px;height:1px;background:#e6e6e6"></div>
<div class="t" style="left:4px;top:248px;font-size:13px;line-height:18px;color:#666">买入</div>
<div class="t" style="left:95px;top:248px;font-size:13px;line-height:18px;color:#666;transform:scaleY(1.075);transform-origin:0 4.2px">BTC/USDT</div>
<div class="t" style="left:196px;top:248px;font-size:13px;line-height:18px;color:#666">已平仓</div>
<div class="t" style="left:367px;top:248px;font-size:13px;line-height:18px;color:#666;transform:scaleY(1.075);transform-origin:0 4.2px">26538.55000…</div>
<div class="t" style="left:488px;top:248px;font-size:13px;line-height:18px;color:#666;transform:scaleY(1.075);transform-origin:0 4.2px">26538.60000…</div>
<div class="t" style="left:609px;top:248px;font-size:13px;line-height:18px;color:#666;transform:scaleY(1.075);transform-origin:0 4.2px">26552.02000…</div>
<div class="t" style="left:730px;top:248px;font-size:13px;line-height:18px;color:#666;transform:scaleY(1.075);transform-origin:0 4.2px">185</div>
<div class="t" style="left:821px;top:248px;font-size:13px;line-height:18px;color:#666;transform:scaleY(1.075);transform-origin:0 4.2px">100</div>
<div class="t" style="left:912px;top:248px;font-size:13px;line-height:18px;color:#666;transform:scaleY(1.075);transform-origin:0 4.2px">4909641.000…</div>
<div class="t" style="left:1033px;top:248px;font-size:13px;line-height:18px;color:#666;transform:scaleY(1.075);transform-origin:0 4.2px">4909641.00000000</div>
<div class="t" style="left:1204px;top:248px;font-size:13px;line-height:18px;color:#666;transform:scaleY(1.075);transform-origin:0 4.2px">2023-09-25 02:24:26</div>
<div class="t" style="left:1375px;top:248px;font-size:13px;line-height:18px;color:#666;transform:scaleY(1.075);transform-origin:0 4.2px">2023-09-25 02:24:34</div>
<div class="t" style="left:1546px;top:248px;font-size:13px;line-height:18px;color:#666;transform:scaleY(1.075);transform-origin:0 4.2px;width:94px;overflow:hidden">2023-09-25 02:24:34</div>
<div class="abs" style="left:0;top:281px;width:1642px;height:1px;background:#e6e6e6"></div>
<div class="t" style="left:4px;top:295px;font-size:13px;line-height:18px;color:#666">卖出</div>
<div class="t" style="left:95px;top:295px;font-size:13px;line-height:18px;color:#666;transform:scaleY(1.075);transform-origin:0 4.2px">ETH/USDT</div>
<div class="t" style="left:196px;top:295px;font-size:13px;line-height:18px;color:#666">已平仓</div>
<div class="t" style="left:367px;top:295px;font-size:13px;line-height:18px;color:#666;transform:scaleY(1.075);transform-origin:0 4.2px">1630.430000…</div>
<div class="t" style="left:488px;top:295px;font-size:13px;line-height:18px;color:#666;transform:scaleY(1.075);transform-origin:0 4.2px">1630.430000…</div>
<div class="t" style="left:609px;top:295px;font-size:13px;line-height:18px;color:#666;transform:scaleY(1.075);transform-origin:0 4.2px">1630.390000…</div>
<div class="t" style="left:730px;top:295px;font-size:13px;line-height:18px;color:#666;transform:scaleY(1.075);transform-origin:0 4.2px">10</div>
<div class="t" style="left:821px;top:295px;font-size:13px;line-height:18px;color:#666;transform:scaleY(1.075);transform-origin:0 4.2px">100</div>
<div class="t" style="left:912px;top:295px;font-size:13px;line-height:18px;color:#666;transform:scaleY(1.075);transform-origin:0 4.2px">163.04300000</div>
<div class="t" style="left:1033px;top:295px;font-size:13px;line-height:18px;color:#666;transform:scaleY(1.075);transform-origin:0 4.2px">163.04300000</div>
<div class="t" style="left:1204px;top:295px;font-size:13px;line-height:18px;color:#666;transform:scaleY(1.075);transform-origin:0 4.2px">2023-09-15 14:33:48</div>
<div class="t" style="left:1375px;top:295px;font-size:13px;line-height:18px;color:#666;transform:scaleY(1.075);transform-origin:0 4.2px">2023-09-15 14:34:52</div>
<div class="t" style="left:1546px;top:295px;font-size:13px;line-height:18px;color:#666;transform:scaleY(1.075);transform-origin:0 4.2px;width:94px;overflow:hidden">2023-09-15 14:34:52</div>
<div class="abs" style="left:0;top:328px;width:1642px;height:1px;background:#e6e6e6"></div>
<div class="t" style="left:4px;top:342px;font-size:13px;line-height:18px;color:#666">买入</div>
<div class="t" style="left:95px;top:342px;font-size:13px;line-height:18px;color:#666;transform:scaleY(1.075);transform-origin:0 4.2px">ETH/USDT</div>
<div class="t" style="left:196px;top:342px;font-size:13px;line-height:18px;color:#666">已平仓</div>
<div class="t" style="left:367px;top:342px;font-size:13px;line-height:18px;color:#666;transform:scaleY(1.075);transform-origin:0 4.2px">1631.160000…</div>
<div class="t" style="left:488px;top:342px;font-size:13px;line-height:18px;color:#666;transform:scaleY(1.075);transform-origin:0 4.2px">1631.160000…</div>
<div class="t" style="left:609px;top:342px;font-size:13px;line-height:18px;color:#666;transform:scaleY(1.075);transform-origin:0 4.2px">1630.650000…</div>
<div class="t" style="left:730px;top:342px;font-size:13px;line-height:18px;color:#666;transform:scaleY(1.075);transform-origin:0 4.2px">10</div>
<div class="t" style="left:821px;top:342px;font-size:13px;line-height:18px;color:#666;transform:scaleY(1.075);transform-origin:0 4.2px">100</div>
<div class="t" style="left:912px;top:342px;font-size:13px;line-height:18px;color:#666;transform:scaleY(1.075);transform-origin:0 4.2px">163.11600000</div>
<div class="t" style="left:1033px;top:342px;font-size:13px;line-height:18px;color:#666;transform:scaleY(1.075);transform-origin:0 4.2px">163.11600000</div>
<div class="t" style="left:1204px;top:342px;font-size:13px;line-height:18px;color:#666;transform:scaleY(1.075);transform-origin:0 4.2px">2023-09-15 14:28:00</div>
<div class="t" style="left:1375px;top:342px;font-size:13px;line-height:18px;color:#666;transform:scaleY(1.075);transform-origin:0 4.2px">2023-09-15 14:30:04</div>
<div class="t" style="left:1546px;top:342px;font-size:13px;line-height:18px;color:#666;transform:scaleY(1.075);transform-origin:0 4.2px;width:94px;overflow:hidden">2023-09-15 14:30:04</div>
<div class="abs" style="left:0;top:375px;width:1642px;height:1px;background:#e6e6e6"></div>
<div class="t" style="left:4px;top:389px;font-size:13px;line-height:18px;color:#666">卖出</div>
<div class="t" style="left:95px;top:389px;font-size:13px;line-height:18px;color:#666;transform:scaleY(1.075);transform-origin:0 4.2px">BTC/USDT</div>
<div class="t" style="left:196px;top:389px;font-size:13px;line-height:18px;color:#666">已平仓</div>
<div class="t" style="left:367px;top:389px;font-size:13px;line-height:18px;color:#666;transform:scaleY(1.075);transform-origin:0 4.2px">25672.86000…</div>
<div class="t" style="left:488px;top:389px;font-size:13px;line-height:18px;color:#666;transform:scaleY(1.075);transform-origin:0 4.2px">25672.81000…</div>
<div class="t" style="left:609px;top:389px;font-size:13px;line-height:18px;color:#666;transform:scaleY(1.075);transform-origin:0 4.2px">25683.50000…</div>
<div class="t" style="left:730px;top:389px;font-size:13px;line-height:18px;color:#666;transform:scaleY(1.075);transform-origin:0 4.2px">118</div>
<div class="t" style="left:821px;top:389px;font-size:13px;line-height:18px;color:#666;transform:scaleY(1.075);transform-origin:0 4.2px">50</div>
<div class="t" style="left:912px;top:389px;font-size:13px;line-height:18px;color:#666;transform:scaleY(1.075);transform-origin:0 4.2px">6058783.160…</div>
<div class="t" style="left:1033px;top:389px;font-size:13px;line-height:18px;color:#666;transform:scaleY(1.075);transform-origin:0 4.2px">6058783.16000000</div>
<div class="t" style="left:1204px;top:389px;font-size:13px;line-height:18px;color:#666;transform:scaleY(1.075);transform-origin:0 4.2px">2023-09-07 20:38:59</div>
<div class="t" style="left:1375px;top:389px;font-size:13px;line-height:18px;color:#666;transform:scaleY(1.075);transform-origin:0 4.2px">2023-09-07 21:10:50</div>
<div class="t" style="left:1546px;top:389px;font-size:13px;line-height:18px;color:#666;transform:scaleY(1.075);transform-origin:0 4.2px;width:94px;overflow:hidden">2023-09-07 21:10:50</div>
<div class="abs" style="left:79px;top:0;width:1px;height:407px;background:#e6e6e6"></div>
<div class="abs" style="left:180px;top:0;width:1px;height:407px;background:#e6e6e6"></div>
<div class="abs" style="left:351px;top:0;width:1px;height:407px;background:#e6e6e6"></div>
<div class="abs" style="left:472px;top:0;width:1px;height:407px;background:#e6e6e6"></div>
<div class="abs" style="left:593px;top:0;width:1px;height:407px;background:#e6e6e6"></div>
<div class="abs" style="left:714px;top:0;width:1px;height:407px;background:#e6e6e6"></div>
<div class="abs" style="left:805px;top:0;width:1px;height:407px;background:#e6e6e6"></div>
<div class="abs" style="left:896px;top:0;width:1px;height:407px;background:#e6e6e6"></div>
<div class="abs" style="left:1017px;top:0;width:1px;height:407px;background:#e6e6e6"></div>
<div class="abs" style="left:1188px;top:0;width:1px;height:407px;background:#e6e6e6"></div>
<div class="abs" style="left:1359px;top:0;width:1px;height:407px;background:#e6e6e6"></div>
<div class="abs" style="left:1530px;top:0;width:1px;height:407px;background:#e6e6e6"></div>
</div>
<div class="abs" style="left:1883px;top:317px;width:16px;height:407px;background:#f1f1f1"></div>
<div class="abs" style="left:1885px;top:334px;width:13px;height:162px;background:#c1c1c1"></div>
<svg style="left:1888px;top:323px" width="7" height="5" viewBox="0 0 7 5"><path d="M0 4.5L3.5 0.5L7 4.5z" fill="#a3a3a3"/></svg>
<svg style="left:1888px;top:711px" width="7" height="5" viewBox="0 0 7 5"><path d="M0 0.5L3.5 4.5L7 0.5z" fill="#505050"/></svg>
<div class="abs" style="left:241px;top:724px;width:1642px;height:16px;background:#f1f1f1"></div>
<div class="abs" style="left:1883px;top:724px;width:16px;height:16px;background:#dcdcdc"></div>
<div class="abs" style="left:615px;top:726px;width:1207px;height:13px;background:#c1c1c1"></div>
<svg style="left:247px;top:728px" width="5" height="8" viewBox="0 0 5 8"><path d="M4.5 0L0.5 4L4.5 8z" fill="#505050"/></svg>
<svg style="left:1872px;top:728px" width="5" height="8" viewBox="0 0 5 8"><path d="M0.5 0L4.5 4L0.5 8z" fill="#505050"/></svg>
<div class="abs" style="left:241px;top:740px;width:1658px;height:1px;background:#e6e6e6"></div>
<svg style="left:257px;top:755px" width="8" height="13" viewBox="0 0 8 13"><path d="M7 0.8L1.2 6.5L7 12.2" stroke="#c8c8c8" stroke-width="1.3" fill="none"/></svg>
<div class="abs" style="left:280px;top:748px;width:31px;height:26px;background:#f2f2f2;border-radius:2px"></div>
<div class="t" style="left:280px;top:752px;width:31px;text-align:center;font-size:12px;line-height:18px;color:#fff">1</div>
<div class="t" style="left:321px;top:752px;font-size:12px;line-height:18px;color:#333">2</div>
<svg style="left:355px;top:755px" width="8" height="13" viewBox="0 0 8 13"><path d="M1 0.8L6.8 6.5L1 12.2" stroke="#333" stroke-width="1.3" fill="none"/></svg>
<div class="t" style="left:378px;top:751px;font-size:12px;line-height:20px;color:#999">到第</div>
<div class="abs" style="left:412px;top:748px;width:40px;height:26px;border:1px solid #e6e6e6;border-radius:2px"></div>
<div class="t" style="left:412px;top:752px;width:40px;text-align:center;font-size:12px;line-height:18px;color:#333">1</div>
<div class="t" style="left:462px;top:751px;font-size:12px;line-height:20px;color:#999">页</div>
<div class="abs" style="left:484px;top:748px;width:46px;height:26px;border:1px solid #e6e6e6;border-radius:2px"></div>
<div class="t" style="left:484px;top:752px;width:46px;text-align:center;font-size:12px;line-height:20px;color:#333">确定</div>
<div class="t" style="left:540px;top:751px;font-size:12px;line-height:20px;color:#333">共 21 条</div>
<div class="abs" style="left:594px;top:748px;width:75px;height:26px;border:1px solid #e6e6e6;border-radius:2px"></div>
<div class="t" style="left:602px;top:751px;font-size:12px;line-height:20px;color:#222">20 条/页</div>
<svg style="left:654px;top:758px" width="10" height="7" viewBox="0 0 10 7"><path d="M1 1l4 4 4-4" stroke="#111" stroke-width="2" fill="none"/></svg>
<svg style="left:0;top:0" width="1920" height="901" viewBox="0 0 1920 901"><path d="M1225.33 564.63L1459.94 400.17L1456.62 398.32L1475.90 394.10L1464.98 410.54L1464.46 406.77L1226.17 565.87z" fill="#fd3434"/><circle cx="1225.75" cy="565.25" r="0.75" fill="#fd3434"/></svg>
</body></html>
